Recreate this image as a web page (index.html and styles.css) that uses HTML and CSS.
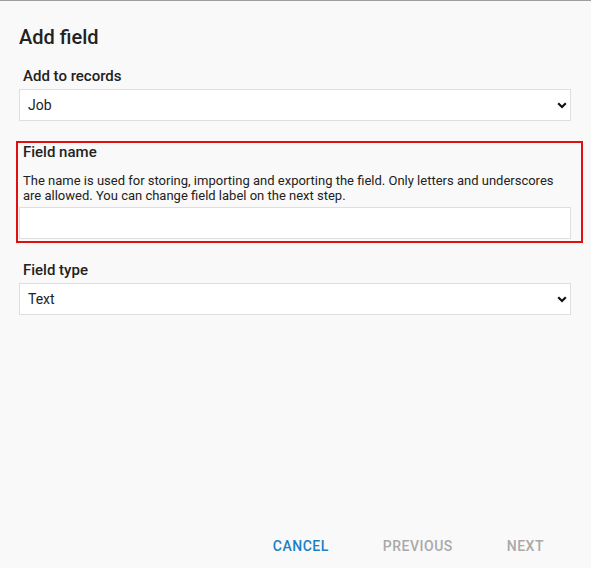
FILE: index.html
```html
<!DOCTYPE html>
<html lang="en">
  <head>
    <meta charset="UTF-8" />
    <meta name="viewport" content="width=device-width, initial-scale=1.0" />
    <title>Add field</title>
    <link rel="stylesheet" href="styles.css">
  </head>
  <body>
    <div class="dialog">
      <h1 class="dialog-title">Add field</h1>

      <div class="field">
        <label class="field-label" for="records">Add to records</label>
        <div class="select-wrap">
          <select id="records" class="field-input">
            <option>Job</option>
          </select>
          <svg class="chevron" width="10" height="7" viewBox="0 0 10 7">
            <path d="M1.2 1.2 L5 5 L8.8 1.2" fill="none" stroke="#111" stroke-width="2.2" />
          </svg>
        </div>
      </div>

      <div class="field field-error">
        <label class="field-label" for="fieldName">Field name</label>
        <p class="field-help">
          The name is used for storing, importing and exporting the field. Only letters and underscores
          are allowed. You can change field label on the next step.
        </p>
        <input type="text" id="fieldName" class="field-input" />
      </div>

      <div class="field">
        <label class="field-label" for="fieldType">Field type</label>
        <div class="select-wrap">
          <select id="fieldType" class="field-input">
            <option>Text</option>
          </select>
          <svg class="chevron" width="10" height="7" viewBox="0 0 10 7">
            <path d="M1.2 1.2 L5 5 L8.8 1.2" fill="none" stroke="#111" stroke-width="2.2" />
          </svg>
        </div>
      </div>

      <div class="dialog-actions">
        <button class="btn btn-primary">Cancel</button>
        <button class="btn" disabled>Previous</button>
        <button class="btn" disabled>Next</button>
      </div>
    </div>
  </body>
</html>
```

FILE: styles.css
```css
html,
body {
  height: 100%;
}

body {
  margin: 0;
  font-family: Roboto, "Liberation Sans", Arial, sans-serif;
  background-color: #f9f9f9;
  color: #222;
  border-top: 1px solid #9e9e9e;
  box-sizing: border-box;
}

.dialog {
  display: flex;
  flex-direction: column;
  height: 100%;
  box-sizing: border-box;
  padding: 24px 20px 4px 19px;
}

.dialog-title {
  margin: 0 0 19px;
  font-size: 20px;
  line-height: 24px;
  font-weight: 500;
  color: #222;
}

.field {
  display: flex;
  flex-direction: column;
  margin-bottom: 20px;
}

.field-label {
  padding-left: 4px;
  margin-bottom: 4px;
  font-size: 15px;
  line-height: 17px;
  font-weight: 500;
  color: #222;
}

/* highlighted group (validation error) */
.field-error {
  margin: 0 -12px 19px -3px;
  padding: 1px 10px 2px 1px;
  border: 2px solid #e01010;
}

.field-help {
  margin: 8px 0 4px;
  padding-left: 4px;
  font-size: 13px;
  line-height: 15px;
  color: #222;
}

.field-input {
  display: block;
  width: 100%;
  height: 32px;
  box-sizing: border-box;
  margin: 0;
  padding: 0 8px;
  border: 1px solid #dedede;
  border-radius: 0;
  background: #fff;
  font-family: inherit;
  font-size: 14px;
  color: #222;
  outline: none;
}

select.field-input {
  appearance: none;
  -webkit-appearance: none;
}

.select-wrap {
  position: relative;
}

.chevron {
  position: absolute;
  right: 4px;
  top: 13px;
  pointer-events: none;
}

.dialog-actions {
  display: flex;
  justify-content: flex-end;
  gap: 54px;
  margin-top: auto;
  padding-right: 27px;
}

.btn {
  height: 36px;
  padding: 0;
  border: none;
  background: none;
  font-family: inherit;
  font-size: 14px;
  font-weight: 500;
  letter-spacing: 0.5px;
  text-transform: uppercase;
  color: #a9a9a9;
  cursor: pointer;
}

.btn-primary {
  color: #1b7fc4;
}

.btn:disabled {
  cursor: default;
}
```
